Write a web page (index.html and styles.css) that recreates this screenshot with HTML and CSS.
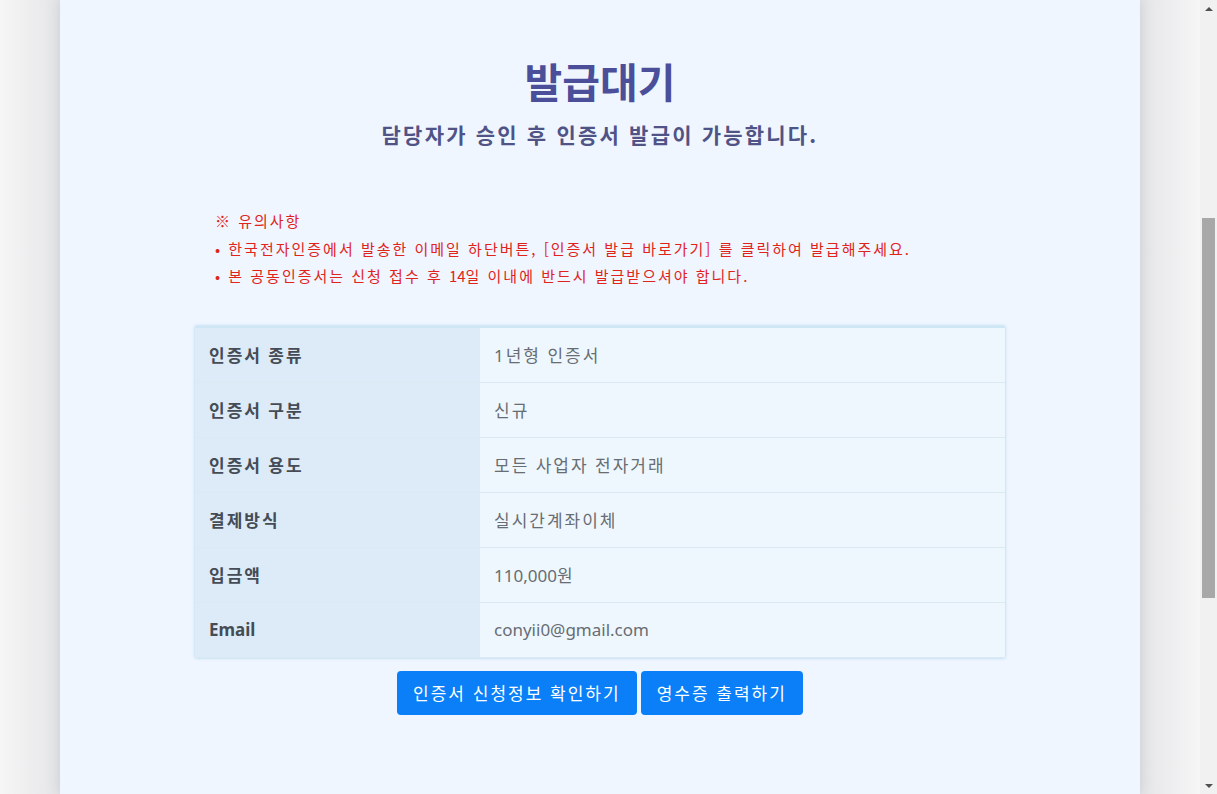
FILE: index.html
```html
<!DOCTYPE html>
<html lang="ko">
<head>
<meta charset="utf-8">
<title>발급대기</title>
<link rel="stylesheet" href="styles.css">
</head>
<body>
<div class="viewport">
  <div class="page">
    <main class="container">
      <h1 class="title">발급대기</h1>
      <p class="subtitle">담당자가 승인 후 인증서 발급이 가능합니다.</p>

      <div class="notice">
        <p>※ 유의사항</p>
        <p>• 한국전자인증에서 발송한 이메일 하단버튼, [인증서 발급 바로가기] 를 클릭하여 발급해주세요.</p>
        <p>• 본 공동인증서는 신청 접수 후 <span class="latin">14</span>일 이내에 반드시 발급받으셔야 합니다.</p>
      </div>

      <table class="info">
        <tr><th>인증서 종류</th><td>1년형 인증서</td></tr>
        <tr><th>인증서 구분</th><td>신규</td></tr>
        <tr><th>인증서 용도</th><td>모든 사업자 전자거래</td></tr>
        <tr><th>결제방식</th><td>실시간계좌이체</td></tr>
        <tr><th>입금액</th><td><span class="latin">110,000</span>원</td></tr>
        <tr><th class="latin">Email</th><td class="latin">conyii0@gmail.com</td></tr>
      </table>

      <div class="actions">
        <button class="btn">인증서 신청정보 확인하기</button>
        <button class="btn">영수증 출력하기</button>
      </div>
    </main>
  </div>
  <div class="scrollbar">
    <div class="arrow up"></div>
    <div class="track"><div class="thumb"></div></div>
    <div class="arrow down"></div>
  </div>
</div>
</body>
</html>
```

FILE: styles.css
```css
html, body {
  margin: 0;
  padding: 0;
  height: 100%;
  overflow: hidden;
}
body {
  font-family: "Noto Sans", "Noto Sans CJK KR", sans-serif;
  background: #f5f5f5;
}
.viewport {
  display: flex;
  height: 794px;
}
.page {
  flex: 1;
  display: flex;
  justify-content: center;
  background: linear-gradient(to right, #f6f6f6 0, #e4e5e7 60px, #e4e5e7 1140px, #f6f6f6 100%);
  overflow: hidden;
}
.container {
  width: 1080px;
  background: #f0f6ff;
  box-shadow: 0 0 12px rgba(120, 130, 145, 0.25);
  padding-top: 52px;
  box-sizing: border-box;
  display: flex;
  flex-direction: column;
  align-items: center;
}
.title {
  margin: 0;
  font-family: "Noto Sans CJK KR", sans-serif;
  font-size: 41px;
  font-weight: 700;
  line-height: 56px;
  color: #4b4f9a;
}
.subtitle {
  margin: 11px 0 0;
  font-family: "Noto Sans CJK KR", sans-serif;
  font-size: 21px;
  font-weight: 700;
  line-height: 30px;
  letter-spacing: 2.2px;
  color: #4f5385;
}
.notice {
  width: 770px;
  margin-top: 58px;
  color: #e0241c;
  font-family: "Noto Sans CJK KR", sans-serif;
  font-size: 15px;
  line-height: 27.5px;
  letter-spacing: 2px;
}
.notice p {
  margin: 0;
}
.latin {
  letter-spacing: 0;
}
.info {
  width: 810px;
  margin-top: 36px;
  border-collapse: collapse;
  box-shadow: 0 0 3px rgba(150, 200, 230, 0.8);
  border-top: 2px solid #cfe6f4;
}
.info th,
.info td {
  height: 54px;
  padding: 0 14px;
  text-align: left;
  font-size: 17px;
  letter-spacing: 2px;
  border-bottom: 1px solid #dbe9f3;
}
.info th {
  width: 257px;
  background: #dcebf7;
  color: #454c56;
  font-weight: 700;
}
.info td {
  background: #eff7fe;
  color: #676d73;
  font-weight: 400;
}
.info .latin {
  letter-spacing: 0;
}
.actions {
  margin-top: 13px;
  display: flex;
  gap: 4px;
}
.btn {
  height: 44px;
  padding: 0 16px;
  border: none;
  border-radius: 4px;
  background: #0a7ff8;
  color: #ffffff;
  font-family: "Noto Sans CJK KR", sans-serif;
  font-size: 17px;
  letter-spacing: 2px;
  cursor: pointer;
}
.scrollbar {
  width: 17px;
  background: #f1f1f1;
  display: flex;
  flex-direction: column;
}
.arrow {
  height: 17px;
  display: flex;
  align-items: center;
  justify-content: center;
}
.arrow::before {
  content: "";
  border-left: 4px solid transparent;
  border-right: 4px solid transparent;
}
.arrow.up::before {
  border-bottom: 4px solid #505050;
}
.arrow.down::before {
  border-top: 4px solid #505050;
}
.track {
  flex: 1;
  display: flex;
  flex-direction: column;
  padding-top: 201px;
}
.thumb {
  margin: 0 2px;
  height: 380px;
  background: #a8a8a8;
}
```
